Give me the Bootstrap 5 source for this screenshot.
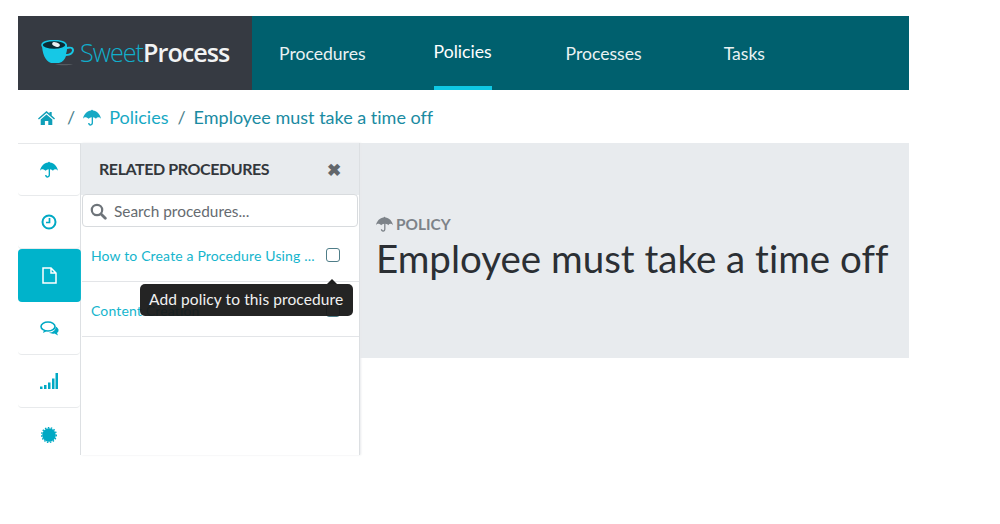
<!DOCTYPE html>
<html lang="en">
<head>
  <meta charset="UTF-8">
  <meta name="viewport" content="width=device-width, initial-scale=1.0">
  <title>Employee must take a time off</title>
  <link href="https://cdn.jsdelivr.net/npm/bootstrap@5.3.0/dist/css/bootstrap.min.css" rel="stylesheet">
  <style>
    html, body { height: 100%; }
    body { font-family: Lato, "Liberation Sans", sans-serif; background: #fff; overflow: hidden; font-variant-ligatures: none; }
    .sp-page { width: 891px; margin: 16px 0 0 18px; }
    .sp-top { height: 74px; background: #00606e; }
    .sp-logo { width: 234px; background: #363a42; padding-left: 23px; }
    .sp-brand { font-family: "Open Sans", sans-serif; font-size: 25.2px; font-weight: 300; letter-spacing: -1px; color: #11aecb; margin-left: 4px; line-height: 1; }
    .sp-brand b { color: #f2f3f4; font-weight: 600; }
    .sp-menu a { display: flex; align-items: center; color: #e9f2f3; font-size: 17.6px; text-decoration: none; height: 74px; border-bottom: 4px solid transparent; padding-top: 6px; }
    .sp-menu a.sp-on { border-bottom-color: #0fc8e4; color: #fff; padding-top: 2px; }
    .sp-crumbs { height: 53px; padding: 2px 0 0 20px; font-size: 18px; color: #17a9c4; }
    .sp-crumbs .sp-sep { color: #4b7f8c; margin: 0 8px 0 9px; }
    .sp-crumbs .sp-cur { color: #1a8ba2; }
    .sp-work { height: 312px; }
    .sp-rail { width: 63px; border-right: 1px solid #dcdfe2; border-top: 1px solid #e6e8ea; }
    .sp-tab { height: 53px; border-bottom: 1px solid #e8eaec; border-radius: 4px; color: #00a9c4; }
    .sp-tab:first-child { height: 52px; }
    .sp-tab.sp-on { background: #00b3cb; color: #fff; border-bottom: 0; margin-right: -1px; position: relative; }
    .sp-panel { width: 279px; border-right: 1px solid #dcdfe2; position: relative; box-shadow: 1px 0 2px #e8eaec; }
    .sp-phead { height: 52px; background: #e8ebee; padding: 0 18px; font-size: 16px; font-weight: 700; color: #33373c; letter-spacing: -.42px; }
    .sp-x { color: #62666b; font-size: 17px; line-height: 1; }
    .sp-search { height: 33px; margin: -1px 1px 0 1px; padding: 2px 0 0 7px; border: 1px solid #d8dbde; border-radius: 4px; gap: 7px; background: #fff; font-size: 15.4px; color: #666b70; }
    .sp-item { height: 55px; padding: 2px 19px 0 9px; border-bottom: 1px solid #e3e5e8; margin-left: 1px; font-size: 14px; color: #15b5cd; letter-spacing: .15px; }
    .sp-check { width: 14px; height: 14px; border: 1.5px solid #4f7d88; border-radius: 3px; flex: none; }
    .sp-tip { position: absolute; left: 59px; top: 141px; height: 32px; width: 213px; background: rgba(24, 24, 24, .95); border-radius: 5px; color: #f1f1f1; font-size: 15.5px; padding-left: 9px; letter-spacing: .1px; }
    .sp-tip::before { content: ""; position: absolute; left: 187px; top: -5px; border: 5px solid transparent; border-top: 0; border-bottom-color: #1e1e1e; }
    .sp-hero { height: 215px; background: #e8ebee; padding: 71px 0 0 16px; }
    .sp-kind { font-size: 15.4px; font-weight: 700; color: #7d8389; line-height: 20px; gap: 3px; }
    .sp-hero h1 { font-family: Lato, sans-serif; font-size: 38.5px; font-weight: 400; color: #2b2f34; margin: 2px 0 0; line-height: 44px; white-space: nowrap; }
  </style>
</head>
<body>

<svg width="0" height="0" class="position-absolute">
  <symbol id="brolly" viewBox="0 0 16 16">
    <path fill="currentColor" d="M8 .6c.5 0 .8.3.8.8C12.300 1.800 15.200 4.500 16 8.600c-.7-.8-1.500-1.200-2.300-1.200-.9 0-1.600.4-2.200 1.200-.6-.7-1.400-1.200-2.600-1.300v5c0 1.500-.8 2.500-2.200 2.500-1.300 0-2.100-.9-2.200-2.300h1.300c0 .7.400 1.100.9 1.100.6 0 1-.5 1-1.300v-5c-1.200.1-2 .6-2.600 1.300C3.500 7.800 2.800 7.400 2 7.400c-.8 0-1.400.4-2 1.200C.8 4.500 3.700 1.800 7.200 1.400c0-.5.300-.8.800-.8z"/>
  </symbol>
</svg>

<div class="sp-page">
  <!-- top bar -->
  <div class="sp-top d-flex">
    <div class="sp-logo d-flex align-items-center">
      <svg width="35" height="26" viewBox="0 0 35 26">
        <path fill="#16c8e6" d="M1 4c0 9 3 17 9 19h8c4-1 6-4 7-7 5 0 8-3 8-6 0-3-3-4-7-3l0-3c-3 3-8 4-13 4S3 7 1 4zm25 5c3-1 5-.5 5 1 0 2-2 4-6 4 .5-2 1-3 1-5z"/>
        <ellipse cx="13" cy="5" rx="12" ry="4.500" fill="#0b2a33" stroke="#16c8e6" stroke-width="1.500"/>
        <ellipse cx="15" cy="4.500" rx="4" ry="2" fill="#e9eef0" transform="rotate(20 15 4.500)"/>
        <path fill="#555a60" d="M14 24h18c-2 1.500-14 2-18 0z"/>
      </svg>
      <span class="sp-brand">Sweet<b>Process</b></span>
    </div>
    <nav class="sp-menu d-flex">
      <a href="#" style="margin-left:27px">Procedures</a>
      <a href="#" class="sp-on" style="margin-left:68px">Policies</a>
      <a href="#" style="margin-left:74px">Processes</a>
      <a href="#" style="margin-left:82px">Tasks</a>
    </nav>
  </div>

  <!-- breadcrumb -->
  <div class="sp-crumbs d-flex align-items-center">
    <svg width="17" height="14" viewBox="0 0 17 14"><path fill="#0f9fb8" d="M8.500 0l3 2.600V1h2.200v3.500L17 7.400l-.9 1L8.500 1.900.9 8.400 0 7.400zM2.700 8.500l5.800-5 5.800 5V14h-4V10H6.900v4h-4.200z"/></svg>
    <span class="sp-sep" style="margin-left:12px">/</span>
    <svg width="18" height="18" class="me-2"><use href="#brolly"/></svg>
    <span>Policies</span>
    <span class="sp-sep">/</span>
    <span class="sp-cur">Employee must take a time off</span>
  </div>

  <!-- workspace -->
  <div class="sp-work d-flex">
    <div class="sp-rail flex-shrink-0">
      <div class="sp-tab d-flex align-items-center justify-content-center"><svg width="18" height="18"><use href="#brolly"/></svg></div>
      <div class="sp-tab d-flex align-items-center justify-content-center">
        <svg width="16" height="16" viewBox="0 0 16 16"><circle cx="8" cy="8" r="6.500" fill="none" stroke="currentColor" stroke-width="2"/><path fill="none" stroke="currentColor" stroke-width="1.700" d="M8.500 4v4.500H5"/></svg>
      </div>
      <div class="sp-tab sp-on d-flex align-items-center justify-content-center">
        <svg width="15" height="17" viewBox="0 0 15 17"><path fill="none" stroke="currentColor" stroke-width="1.500" d="M1 1h8l5 5v10H1zM9 1v5h5"/></svg>
      </div>
      <div class="sp-tab d-flex align-items-center justify-content-center">
        <svg width="19" height="15" viewBox="0 0 19 15"><ellipse cx="8" cy="5.500" rx="7" ry="4.500" fill="none" stroke="currentColor" stroke-width="1.600"/><path fill="currentColor" d="M4 9l-1 3 4-2zM15.500 5.500c2 1 3.500 2.500 3 4.500-.3 1-1 1.500-1.500 2l1 2.500-3.500-2c-2 .5-4 0-5.500-1 3.500 0 7-2 6.500-6z"/></svg>
      </div>
      <div class="sp-tab d-flex align-items-center justify-content-center">
        <svg width="18" height="16" viewBox="0 0 18 16"><path fill="currentColor" d="M0 13.500h2.500V16H0zM4 12h2.500v4H4zM8 9.500h2.500V16H8zM12 5.500h2.500V16H12zM15.500 0H18v16h-2.500z"/></svg>
      </div>
      <div class="sp-tab d-flex align-items-center justify-content-center" style="border-bottom:0">
        <svg width="16" height="16" viewBox="0 0 16 16"><circle cx="8" cy="8" r="6.800" fill="currentColor"/><circle cx="8" cy="8" r="7.300" fill="none" stroke="currentColor" stroke-width="1.400" stroke-dasharray="1.500 1.500"/></svg>
      </div>
    </div>

    <div class="sp-panel flex-shrink-0">
      <div class="sp-phead d-flex align-items-center justify-content-between">
        <span>RELATED PROCEDURES</span>
        <span class="sp-x">✖</span>
      </div>
      <div class="sp-search d-flex align-items-center">
        <svg width="17" height="17" viewBox="0 0 17 17"><circle cx="7" cy="7" r="5.200" fill="none" stroke="#6e747a" stroke-width="2.200"/><path stroke="#6e747a" stroke-width="2.800" stroke-linecap="round" d="M11 11l4.300 4.300"/></svg>
        <span>Search procedures...</span>
      </div>
      <div class="sp-item d-flex align-items-center justify-content-between">
        <span>How to Create a Procedure Using ...</span>
        <span class="sp-check"></span>
      </div>
      <div class="sp-item d-flex align-items-center justify-content-between">
        <span>Content Creation</span>
        <span class="sp-check"></span>
      </div>
      <div class="sp-tip d-flex align-items-center">Add policy to this procedure</div>
    </div>

    <div class="flex-grow-1">
      <div class="sp-hero">
        <div class="sp-kind d-flex align-items-center">
          <svg width="17" height="17" style="color:#7d8389"><use href="#brolly"/></svg>
          <span>POLICY</span>
        </div>
        <h1>Employee must take a time off</h1>
      </div>
    </div>
  </div>
</div>

<script src="https://cdn.jsdelivr.net/npm/bootstrap@5.3.0/dist/js/bootstrap.bundle.min.js"></script>
</body>
</html>
